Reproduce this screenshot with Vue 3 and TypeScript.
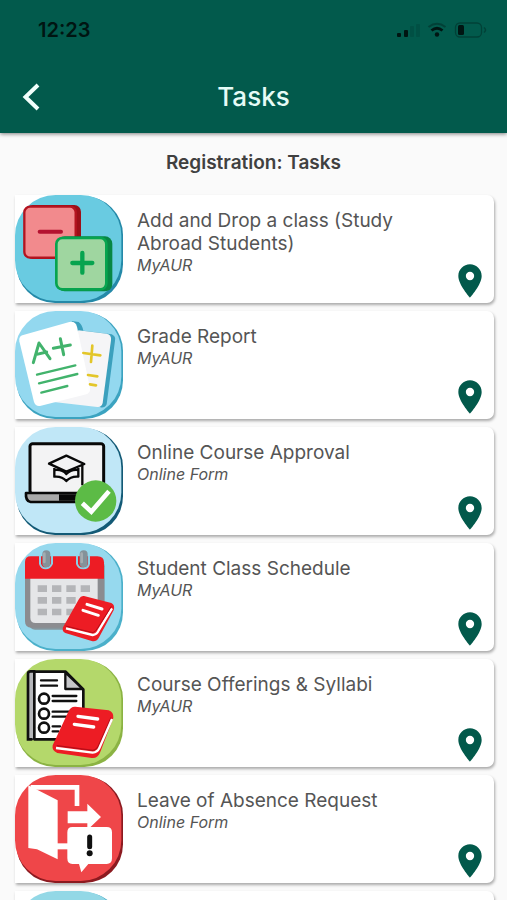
<script setup lang="ts">
type IconName = 'add-drop' | 'grades' | 'approval' | 'schedule' | 'syllabi' | 'leave' | 'plain'

interface Task {
  icon: IconName
  title?: string
  source?: string
  face: string
  edge: string
}

const tasks: Task[] = [
  { icon: 'add-drop', title: 'Add and Drop a class (Study Abroad Students)', source: 'MyAUR', face: '#69cbe1', edge: '#2489a8' },
  { icon: 'grades', title: 'Grade Report', source: 'MyAUR', face: '#93d8ef', edge: '#3ba3c0' },
  { icon: 'approval', title: 'Online Course Approval', source: 'Online Form', face: '#c0e7f7', edge: '#135a76' },
  { icon: 'schedule', title: 'Student Class Schedule', source: 'MyAUR', face: '#96d9ee', edge: '#4bb0ca' },
  { icon: 'syllabi', title: 'Course Offerings & Syllabi', source: 'MyAUR', face: '#b4d86b', edge: '#8bb343' },
  { icon: 'leave', title: 'Leave of Absence Request', source: 'Online Form', face: '#ef4649', edge: '#8c1a20' },
  { icon: 'plain', face: '#93d8e6', edge: '#3ba3c0' },
]
</script>

<template>
  <div class="screen">
    <header class="header">
      <div class="status">
        <span class="clock">12:23</span>
        <svg class="signals" viewBox="0 0 92 20" aria-hidden="true">
          <g fill="#001512">
            <rect x="1" y="13" width="4" height="4" rx="1" />
            <rect x="8" y="10" width="4" height="7" rx="1" />
            <rect x="14" y="6" width="4" height="11" rx="1" opacity=".14" />
            <rect x="20" y="4" width="4" height="13" rx="1" opacity=".14" />
            <circle cx="41" cy="14.500" r="2.200" />
            <rect x="62" y="5" width="6" height="10" rx="1.500" />
          </g>
          <g fill="none" stroke="#001512">
            <path d="M35.500 10.500Q41 6 46.500 10.500" stroke-width="2.800" />
            <path d="M32.500 7Q41 .5 49.500 7" stroke-width="2" opacity=".35" />
            <rect x="59.500" y="3" width="26" height="14" rx="4.500" stroke-width="1.300" opacity=".35" />
            <path d="M88 7.500Q91 10 88 12.500" stroke-width="1.500" opacity=".35" />
          </g>
        </svg>
      </div>
      <div class="nav">
        <button class="back" type="button" aria-label="Back">
          <svg viewBox="0 0 18 28" aria-hidden="true">
            <path d="M16 2 3.500 14 16 26" fill="none" stroke="#f2fffc" stroke-width="4" />
          </svg>
        </button>
        <h1 class="title">Tasks</h1>
      </div>
    </header>

    <main class="content">
      <h2 class="section">Registration: Tasks</h2>
      <ul class="list">
        <li v-for="task in tasks" :key="task.icon">
          <a class="card" href="#">
            <svg class="icon" viewBox="0 0 324 324" aria-hidden="true">
              <rect x="4" y="4" width="320" height="320" rx="116" :fill="task.edge" />
              <rect width="319" height="318" rx="122" :fill="task.face" />

              <g v-if="task.icon === 'add-drop'" transform="translate(-45 -30)">
                <rect x="78" y="60" width="165" height="162" rx="20" fill="#9c0f18" />
                <rect x="73" y="65" width="154" height="153" rx="17" fill="#f28a8d" stroke="#b41420" stroke-width="7" />
                <path d="M119 140H183" stroke="#b41230" stroke-width="12" stroke-linecap="round" />
                <rect x="172" y="154" width="165" height="165" rx="22" fill="#078744" />
                <rect x="169" y="159" width="150" height="154" rx="18" fill="#9fd6a0" stroke="#07a44f" stroke-width="8" />
                <path d="M217 234H277M247 204V263" stroke="#07a44f" stroke-width="13" stroke-linecap="round" />
              </g>

              <g v-else-if="task.icon === 'grades'" transform="translate(-30 -18)">
                <path d="M200 48 221 51Q231 58 235 77L320 88Q333 94 330 107L305 298Q299 310 286 307L235 260Z" fill="#3ba0bd" />
                <path d="M220 76 305 86Q320 89 318 105L293 294Q290 307 277 306L140 290Z" fill="#f5f5f7" />
                <path d="M52 91 193 51Q211 47 216 65L255 250Q257 263 244 268L105 303Q92 305 87 291L43 109Q41 95 52 91Z" fill="#fff" />
                <g fill="none" stroke="#42b36c" stroke-width="9" stroke-linecap="round" stroke-linejoin="round">
                  <path d="M85 173 102 114 135 161M92 149 125 141" />
                  <path d="M145 130 196 120M166 101 176 149" />
                  <path d="M96 209 211 181M102 235 217 207M109 263 187 243" stroke-width="7" />
                </g>
                <path d="M235 144 286 151M262 122 258 171M249 210 277 214M255 238 273 241" fill="none" stroke="#e3c629" stroke-width="8" stroke-linecap="round" />
              </g>

              <g v-else-if="task.icon === 'approval'" transform="translate(-30 -15)">
                <rect x="75" y="65" width="221" height="150" rx="8" fill="#f3f3f4" stroke="#080808" stroke-width="9" />
                <path d="M63 213H300V240H77Q61 238 63 213Z" fill="#aaa" stroke="#080808" stroke-width="8" stroke-linejoin="round" />
                <path d="M162 217H300V236H162Z" fill="#080808" />
                <g fill="none" stroke="#080808" stroke-width="7" stroke-linejoin="round">
                  <path d="M132 125 184 101 238 126 184 149Z" />
                  <path d="M148 138V164Q171 162 184 177Q198 162 220 164V138" />
                  <path d="M148 144Q172 141 184 156Q198 141 220 144" />
                  <path d="M232 130V190" />
                </g>
                <circle cx="272" cy="237" r="62" fill="#5cbb46" />
                <path d="M232 244 259 269 312 208" fill="none" stroke="#fff" stroke-width="14" />
              </g>

              <g v-else-if="task.icon === 'schedule'" transform="translate(-30 -15)">
                <rect x="72" y="67" width="227" height="208" rx="18" fill="#86959c" />
                <path d="M60 115H297V246Q297 269 277 269H79Q60 269 60 249Z" fill="#8b8c90" />
                <path d="M76 112H278V255H92Q76 255 76 239Z" fill="#e5e6e8" />
                <path d="M60 122V72Q60 55 77 55H277Q297 55 297 73V122Z" fill="#ed1c24" />
                <path d="M105 53V77Q109 91 122 91T141 77V53M216 53V77Q220 91 235 91T252 77V53" fill="none" stroke="#89d0e6" stroke-width="6" />
                <path d="M124 49V76M236 49V76" stroke="#849299" stroke-width="24" stroke-linecap="round" />
                <path d="M118 47V72M230 47V72" stroke="#a4acb0" stroke-width="8" stroke-linecap="round" />
                <path d="M98 142h28v20h-28zm43 0h28v20h-28zm43 0h28v20h-28zm43 0h28v20h-28zM98 177h28v20h-28zm43 0h28v20h-28zm43 0h28v20h-28zM98 212h28v20h-28zm43 0h28v20h-28zm43 0h28v20h-28z" fill="#b4b5b8" />
                <g stroke-linejoin="round">
                  <path d="M237 174 319 195Q331 201 326 217L281 300Q273 313 260 309L181 285Q170 280 174 268L222 183Q228 172 237 174Z" fill="#ed1c24" />
                  <path d="M183 271 263 291Q276 289 281 277L321 211" fill="none" stroke="#fff" stroke-width="7" />
                  <path d="M182 264 264 284Q272 280 278 270L319 205" fill="none" stroke="#b60d18" stroke-width="3" />
                </g>
                <path d="M246 199 291 213M234 217 280 232" stroke="#fff" stroke-width="9" stroke-linecap="round" />
              </g>

              <g v-else-if="task.icon === 'syllabi'" transform="translate(-30 -15)">
                <path d="M68 258V60Q68 53 76 53H94V258Z" fill="#b6b7bb" />
                <path d="M80 256H69V59Q69 52 77 52H88" fill="none" stroke="#101010" stroke-width="8" stroke-linecap="round" />
                <path d="M88 53H182L235 106V256H88Z" fill="#fff" stroke="#101010" stroke-width="8" stroke-linejoin="round" />
                <path d="M181 55V105H233Z" fill="#c6c7ca" stroke="#101010" stroke-width="7" stroke-linejoin="round" />
                <path d="M108 79H156M108 95H156M143 126H214M143 141H214M143 173H195M143 188H190M143 217H165M143 232H160" stroke="#101010" stroke-width="7" stroke-linecap="round" />
                <g fill="#fff" stroke="#101010" stroke-width="8">
                  <circle cx="117" cy="134" r="15" />
                  <circle cx="117" cy="179" r="15" />
                  <circle cx="117" cy="221" r="15" />
                </g>
                <path d="M211 158 311 169Q327 176 325 192L285 296Q277 314 260 312L157 297Q140 290 143 274L190 173Q197 157 211 158Z" fill="#ed1c24" />
                <path d="M155 275 263 289Q275 287 280 276L318 191" fill="none" stroke="#b60d18" stroke-width="4" />
                <path d="M153 282 263 296Q277 295 283 282L321 195" fill="none" stroke="#fff" stroke-width="7" stroke-linejoin="round" />
                <path d="M219 187 278 195M208 211 266 219" stroke="#fff" stroke-width="10" stroke-linecap="round" />
              </g>

              <g v-else-if="task.icon === 'leave'" transform="translate(-30 -15)">
                <path d="M77 52H216V108" fill="none" stroke="#fff" stroke-width="14" />
                <path d="M70 46 158 91V268L96 238L70 234Z" fill="#fff" />
                <path d="M156 229H194" stroke="#fff" stroke-width="18" />
                <path d="M188 124H247V101L288 141 247 180V160H188Z" fill="#fff" />
                <path d="M202 171H305Q321 171 321 187V265Q321 282 305 282H250L229 307 222 282H202Q187 282 187 265V187Q187 171 202 171Z" fill="#fff" />
                <path d="M254 201V230" stroke="#101010" stroke-width="15" stroke-linecap="round" />
                <circle cx="254" cy="250" r="9" fill="#101010" />
              </g>
            </svg>

            <span v-if="task.title" class="text">
              <span class="name">{{ task.title }}</span>
              <span class="source">{{ task.source }}</span>
            </span>
            <svg class="pin" viewBox="0 0 24 24" aria-hidden="true">
              <path d="M12 2C8.130 2 5 5.130 5 9c0 5.250 7 13 7 13s7-7.750 7-13c0-3.870-3.130-7-7-7zm0 9.500a2.500 2.500 0 1 1 0-5 2.500 2.500 0 0 1 0 5z" fill="#02594b" />
            </svg>
          </a>
        </li>
      </ul>
    </main>
  </div>
</template>

<style>
body {
  margin: 0;
  background: #fafafa;
}
</style>

<style scoped>
.screen {
  display: flex;
  flex-direction: column;
  height: 100vh;
  overflow: hidden;
  background: #fafafa;
  color: #555;
  font-family: Inter, "Liberation Sans", sans-serif;
}

.header {
  position: relative;
  flex: none;
  background: #025a4c;
  box-shadow: 0 1px 4px rgba(0, 0, 0, 0.5);
}

.status {
  display: flex;
  align-items: center;
  justify-content: space-between;
  height: 60px;
  padding: 0 19px 0 38px;
}

.clock {
  color: #001512;
  font-size: 20px;
  font-weight: 600;
}

.signals {
  width: 92px;
  height: 20px;
}

.nav {
  display: grid;
  grid-template-columns: 48px 1fr 48px;
  align-items: center;
  height: 73px;
}

.back {
  display: flex;
  align-items: center;
  height: 48px;
  padding: 0 0 0 22px;
  border: 0;
  background: none;
  cursor: pointer;
}

.back svg {
  width: 18px;
  height: 28px;
}

.title {
  margin: 0;
  color: #e6fbf6;
  font-size: 26px;
  font-weight: 500;
  line-height: 32px;
  text-align: center;
}

.content {
  flex: 1;
  min-height: 0;
  overflow-y: auto;
  scrollbar-width: none;
}

.section {
  margin: 0;
  padding: 18px 0 20px;
  color: #404040;
  font-size: 19px;
  font-weight: 600;
  line-height: 24px;
  text-align: center;
}

.list {
  display: flex;
  flex-direction: column;
  gap: 8px;
  margin: 0;
  padding: 0 13px 8px 15px;
  list-style: none;
}

.card {
  display: flex;
  min-height: 108px;
  border-radius: 0 7px 7px 0;
  background: #fff;
  box-shadow: 1px 2px 3px rgba(0, 0, 0, 0.32);
  color: inherit;
  text-decoration: none;
}

.icon {
  flex: none;
  width: 108px;
  height: 108px;
}

.text {
  display: flex;
  flex: 1;
  flex-direction: column;
  padding: 14px 10px 0 14px;
}

.name {
  font-size: 19px;
  line-height: 23px;
}

.source {
  font-size: 16px;
  font-style: italic;
  line-height: 20px;
}

.pin {
  flex: none;
  align-self: flex-end;
  width: 40px;
  height: 40px;
  margin: 0 4px 2px auto;
}
</style>
